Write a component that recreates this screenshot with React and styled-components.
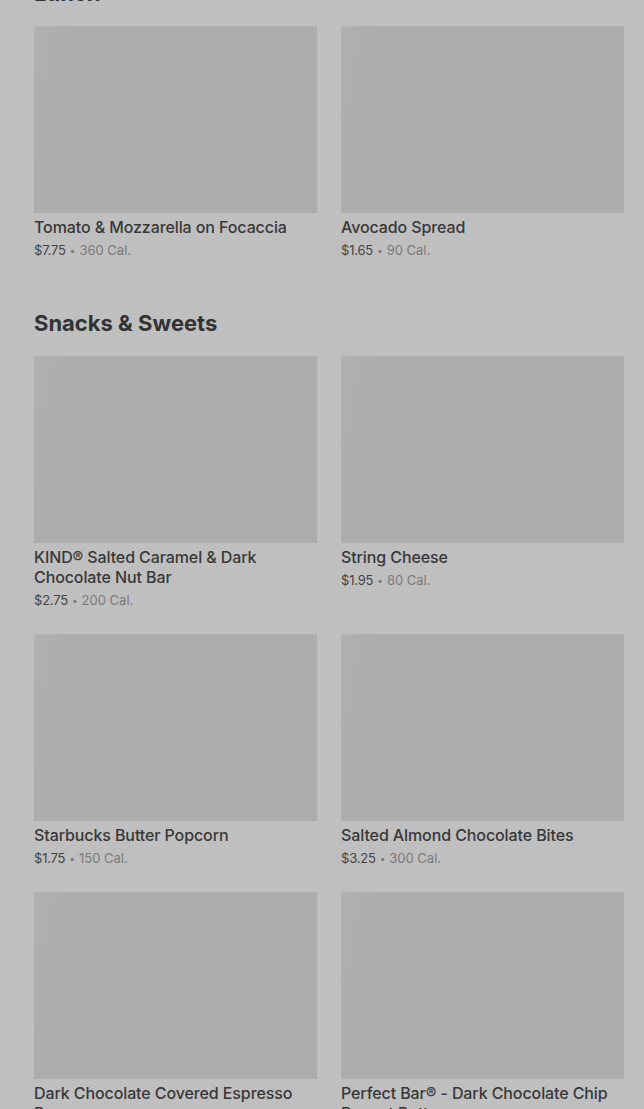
import styled, { createGlobalStyle } from 'styled-components';

const sections = [
  {
    title: 'Lunch',
    items: [
      { name: 'Tomato & Mozzarella on Focaccia', price: '$7.75', cal: '360 Cal.' },
      { name: 'Avocado Spread', price: '$1.65', cal: '90 Cal.' },
    ],
  },
  {
    title: 'Snacks & Sweets',
    items: [
      { name: 'KIND® Salted Caramel & Dark Chocolate Nut Bar', price: '$2.75', cal: '200 Cal.' },
      { name: 'String Cheese', price: '$1.95', cal: '80 Cal.' },
      { name: 'Starbucks Butter Popcorn', price: '$1.75', cal: '150 Cal.' },
      { name: 'Salted Almond Chocolate Bites', price: '$3.25', cal: '300 Cal.' },
      { name: 'Dark Chocolate Covered Espresso Beans', price: '$2.95', cal: '210 Cal.' },
      { name: 'Perfect Bar® - Dark Chocolate Chip Peanut Butter', price: '$3.45', cal: '330 Cal.' },
    ],
  },
];

const App = () => {
  return (
    <>
      <GlobalStyle />
      <Page>
        {sections.map((section) => (
          <Section key={section.title}>
            <Heading>{section.title}</Heading>
            <Grid>
              {section.items.map((item) => (
                <Card key={item.name}>
                  <Thumb />
                  <Name>{item.name}</Name>
                  <Meta>
                    <Price>{item.price}</Price>
                    <Dot>•</Dot>
                    <Cal>{item.cal}</Cal>
                  </Meta>
                </Card>
              ))}
            </Grid>
          </Section>
        ))}
      </Page>
    </>
  );
};

export default App;

const GlobalStyle = createGlobalStyle`
  html, body {
    margin: 0;
    background: #bfbfbf;
    overflow: hidden;
  }
`;

const Page = styled.div`
  height: 1109px;
  overflow: hidden;
  background: #bfbfbf;
  padding: 0 20px 0 34px;
  font-family: Inter, "Noto Sans", sans-serif;
  color: #333;
`;

const Section = styled.section`
  display: flex;
  flex-direction: column;
  margin-bottom: 49px;

  &:first-child {
    margin-top: -21px;
  }
`;

const Heading = styled.h2`
  margin: 0 0 19px;
  font-size: 22px;
  line-height: 28px;
  font-weight: 700;
  letter-spacing: 0;
  color: #333;
`;

const Grid = styled.div`
  display: grid;
  grid-template-columns: 283px 283px;
  column-gap: 24px;
  row-gap: 24px;
`;

const Card = styled.div`
  display: flex;
  flex-direction: column;
`;

const Thumb = styled.div`
  height: 187px;
  background:
    linear-gradient(100deg, rgba(255, 255, 255, 0.06) 0%, rgba(255, 255, 255, 0) 12%),
    #acacac;
  box-shadow: inset 0 1px 0 rgba(255, 255, 255, 0.05);
`;

const Name = styled.div`
  margin-top: 4px;
  font-size: 16px;
  line-height: 20px;
  font-weight: 500;
  letter-spacing: -0.1px;
  color: #383838;
`;

const Meta = styled.div`
  margin-top: 3px;
  display: flex;
  align-items: center;
  gap: 4px;
  font-size: 13px;
  line-height: 20px;
`;

const Price = styled.span`
  color: #444;
  letter-spacing: -0.2px;
`;

const Dot = styled.span`
  color: #777;
  font-size: 10px;
`;

const Cal = styled.span`
  color: #7a7a7a;
`;
